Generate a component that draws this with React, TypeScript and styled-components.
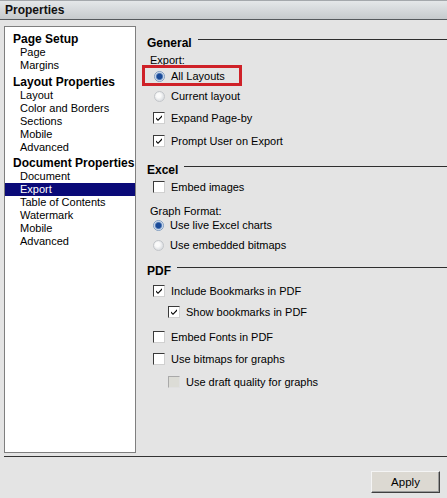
import React from "react";
import styled, { createGlobalStyle } from "styled-components";

const Global = createGlobalStyle`
  html, body { margin: 0; padding: 0; background: #e4e4e4; }
  body { font-family: Tahoma, "Liberation Sans", "DejaVu Sans", sans-serif; font-size: 11px; color: #000; }
`;

const Frame = styled.div`
  width: 447px;
  height: 498px;
  background: #e4e4e4;
  display: flex;
  flex-direction: column;
  overflow: hidden;
`;

const TitleBar = styled.div`
  height: 18px;
  border-top: 1px solid #a4a8ac;
  border-bottom: 1px solid #55595d;
  background: linear-gradient(#e4e7e9, #c6cacd);
  display: flex;
  align-items: center;
  padding-left: 5px;
  font-weight: bold;
  font-size: 12px;
  color: #111;
`;

const Body = styled.div`
  display: flex;
  padding: 6px 0 0 4px;
  height: 427px;
`;

const NavList = styled.div`
  box-sizing: border-box;
  width: 132px;
  height: 427px;
  background: #fff;
  border: 1px solid #7f7f7f;
  padding-top: 5px;
  display: flex;
  flex-direction: column;
`;

const NavHeader = styled.div<{ $gap?: number }>`
  font-weight: bold;
  font-size: 12px;
  height: 14px;
  line-height: 14px;
  padding-left: 8px;
  margin-top: ${(p) => p.$gap ?? 0}px;
`;

const NavItem = styled.div<{ $active?: boolean }>`
  height: 13px;
  line-height: 13px;
  padding-left: 15px;
  font-size: 11px;
  background: ${(p) => (p.$active ? "#0a0a78" : "transparent")};
  color: ${(p) => (p.$active ? "#fff" : "#000")};
`;

const Content = styled.div`
  flex: 1;
  padding: 10px 0 0 11px;
  display: flex;
  flex-direction: column;
`;

const SectionHead = styled.div<{ $mt?: number }>`
  display: flex;
  align-items: center;
  height: 14px;
  margin-top: ${(p) => p.$mt ?? 0}px;
  font-weight: bold;
  font-size: 12px;
`;

const SectionLine = styled.div`
  flex: 1;
  height: 1px;
  background: #2e2e2e;
  margin-left: 6px;
  margin-top: -7px;
`;

const Label = styled.div<{ $mt: number }>`
  height: 14px;
  margin-top: ${(p) => p.$mt}px;
  display: flex;
  align-items: center;
  padding-left: 3px;
  font-size: 11px;
`;

const Row = styled.div<{ $mt: number; $indent: number }>`
  height: 14px;
  margin-top: ${(p) => p.$mt}px;
  display: flex;
  align-items: center;
  padding-left: ${(p) => p.$indent}px;
  font-size: 11px;
  gap: 6px;
  position: relative;
`;

const Highlight = styled.div`
  position: absolute;
  box-sizing: border-box;
  left: -5px;
  top: -4px;
  width: 100px;
  height: 21px;
  border: 3px solid #cf2128;
`;

const RadioDot = styled.span<{ $on?: boolean }>`
  width: 11px;
  height: 11px;
  border-radius: 50%;
  box-sizing: border-box;
  border: 1px solid ${(p) => (p.$on ? "#7f9cc0" : "#c3c6ca")};
  background: ${(p) =>
    p.$on
      ? "radial-gradient(circle at 50% 50%, #1a4a98 0 2.4px, #5f86bd 3.2px, #dfe7f2 4.2px)"
      : "radial-gradient(circle at 40% 40%, #fafafa 0 2px, #e0e2e5 5px)"};
  flex: none;
`;

const CheckBox = styled.span<{ $disabled?: boolean }>`
  width: 12px;
  height: 12px;
  box-sizing: border-box;
  border: 1px solid ${(p) => (p.$disabled ? "#a9a9a9" : "#3a3a3a")};
  border-right-color: ${(p) => (p.$disabled ? "#e0e0e0" : "#d0d0d0")};
  border-bottom-color: ${(p) => (p.$disabled ? "#e0e0e0" : "#d0d0d0")};
  background: ${(p) => (p.$disabled ? "#dcdcd6" : "#fff")};
  display: flex;
  align-items: center;
  justify-content: center;
  flex: none;
`;

const Separator = styled.div`
  margin-left: 4px;
  height: 1px;
  background: #333;
  margin-top: 3px;
`;

const Footer = styled.div`
  display: flex;
  justify-content: flex-end;
  padding: 14px 7px 0 0;
`;

const Button = styled.button`
  width: 69px;
  height: 22px;
  font-family: inherit;
  font-size: 11.5px;
  background: #dcd9d2;
  border: 1px solid #f4f4f4;
  border-right-color: #404040;
  border-bottom-color: #404040;
  box-shadow: inset -1px -1px 0 #9a9a9a;
  padding: 0;
  color: #000;
`;

const Check = () => (
  <svg width="8" height="8" viewBox="0 0 8 8">
    <path d="M1 3.5 L3 5.6 L7 1.2 L7 3 L3 7 L1 5 Z" fill="#000" />
  </svg>
);

const Radio = ({ on, label }: { on?: boolean; label: string }) => (
  <>
    <RadioDot $on={on} />
    <span>{label}</span>
  </>
);

const Box = ({ checked, disabled, label }: { checked?: boolean; disabled?: boolean; label: string }) => (
  <>
    <CheckBox $disabled={disabled}>{checked && <Check />}</CheckBox>
    <span>{label}</span>
  </>
);

export default function App() {
  return (
    <Frame>
      <Global />
      <TitleBar>Properties</TitleBar>
      <Body>
        <NavList>
          <NavHeader>Page Setup</NavHeader>
          <NavItem>Page</NavItem>
          <NavItem>Margins</NavItem>
          <NavHeader $gap={3}>Layout Properties</NavHeader>
          <NavItem>Layout</NavItem>
          <NavItem>Color and Borders</NavItem>
          <NavItem>Sections</NavItem>
          <NavItem>Mobile</NavItem>
          <NavItem>Advanced</NavItem>
          <NavHeader $gap={2}>Document Properties</NavHeader>
          <NavItem>Document</NavItem>
          <NavItem $active>Export</NavItem>
          <NavItem>Table of Contents</NavItem>
          <NavItem>Watermark</NavItem>
          <NavItem>Mobile</NavItem>
          <NavItem>Advanced</NavItem>
        </NavList>
        <Content>
          <SectionHead>
            General
            <SectionLine />
          </SectionHead>
          <Label $mt={3}>Export:</Label>
          <Row $mt={2} $indent={7}>
            <Highlight />
            <Radio on label="All Layouts" />
          </Row>
          <Row $mt={6} $indent={7}>
            <Radio label="Current layout" />
          </Row>
          <Row $mt={8} $indent={6}>
            <Box checked label="Expand Page-by" />
          </Row>
          <Row $mt={9} $indent={6}>
            <Box checked label="Prompt User on Export" />
          </Row>
          <SectionHead $mt={15}>
            Excel
            <SectionLine />
          </SectionHead>
          <Row $mt={3} $indent={6}>
            <Box label="Embed images" />
          </Row>
          <Label $mt={10}>Graph Format:</Label>
          <Row $mt={0} $indent={6}>
            <Radio on label="Use live Excel charts" />
          </Row>
          <Row $mt={6} $indent={6}>
            <Radio label="Use embedded bitmaps" />
          </Row>
          <SectionHead $mt={12}>
            PDF
            <SectionLine />
          </SectionHead>
          <Row $mt={6} $indent={6}>
            <Box checked label="Include Bookmarks in PDF" />
          </Row>
          <Row $mt={7} $indent={21}>
            <Box checked label="Show bookmarks in PDF" />
          </Row>
          <Row $mt={11} $indent={6}>
            <Box label="Embed Fonts in PDF" />
          </Row>
          <Row $mt={8} $indent={6}>
            <Box label="Use bitmaps for graphs" />
          </Row>
          <Row $mt={9} $indent={21}>
            <Box disabled label="Use draft quality for graphs" />
          </Row>
        </Content>
      </Body>
      <Separator />
      <Footer>
        <Button>Apply</Button>
      </Footer>
    </Frame>
  );
}
